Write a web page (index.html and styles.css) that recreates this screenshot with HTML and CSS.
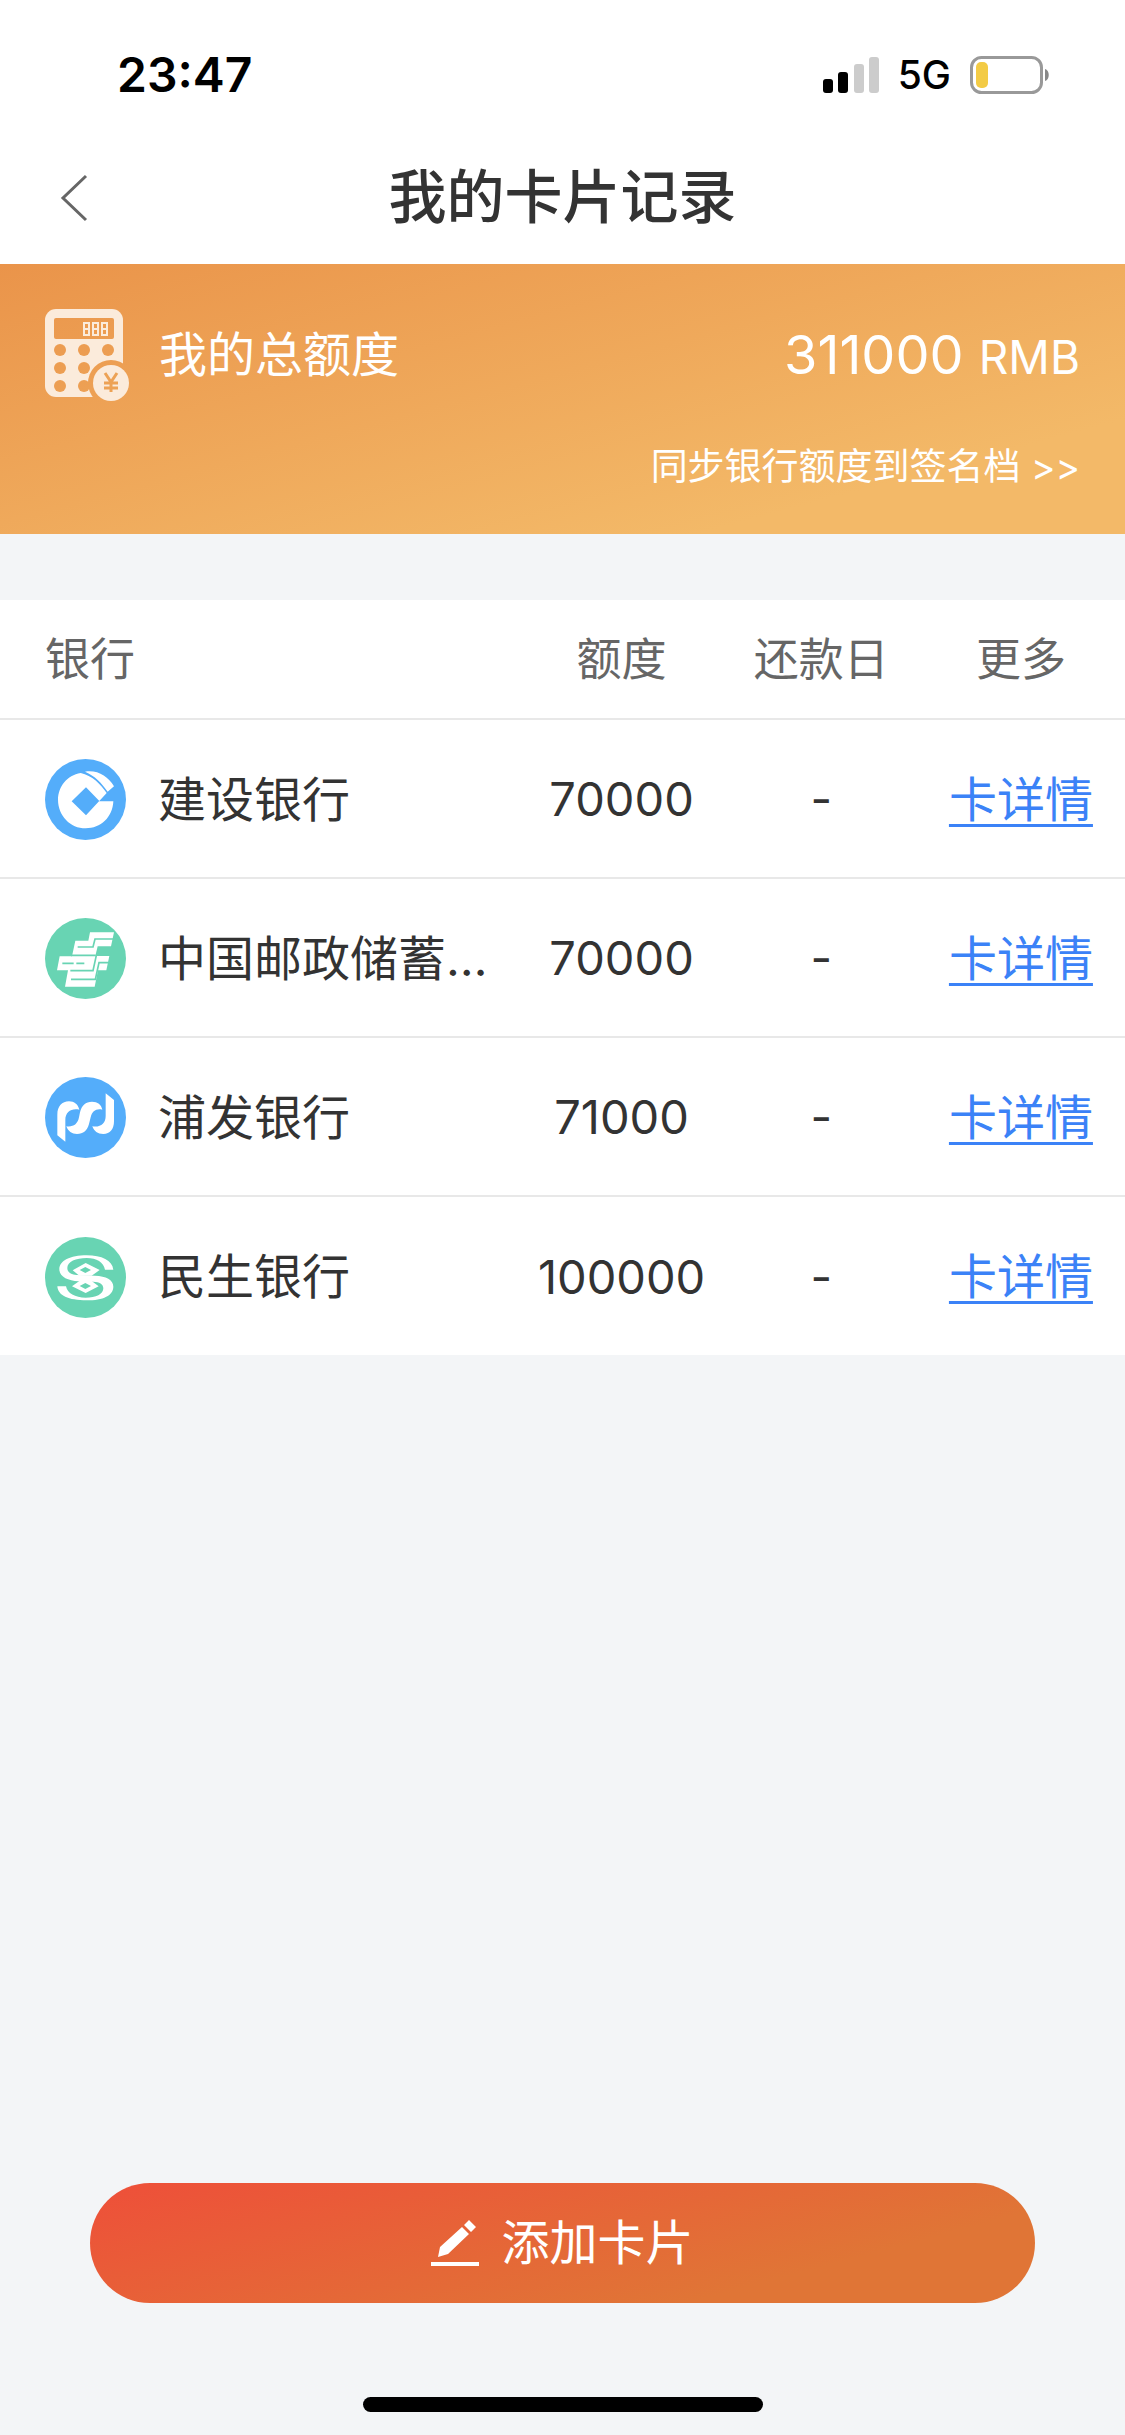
FILE: index.html
```html
<!DOCTYPE html>
<html lang="zh-CN">
<head>
    <meta charset="UTF-8">
    <meta name="viewport" content="width=device-width, initial-scale=1">
    <title>我的卡片记录</title>
    <link rel="stylesheet" href="styles.css">
</head>
<body>

    <div class="status-bar">
        <span class="time">23:47</span>
        <div class="status-icons">
            <svg class="signal" viewBox="0 0 56 36">
                <rect x="0" y="22" width="10" height="14" rx="3"/>
                <rect x="15" y="15" width="10" height="21" rx="3"/>
                <rect class="off" x="31" y="7" width="10" height="29" rx="3"/>
                <rect class="off" x="46" y="0" width="10" height="36" rx="3"/>
            </svg>
            <span class="network">5G</span>
            <svg class="battery" viewBox="0 0 80 38">
                <rect x="1.5" y="1.5" width="70" height="35" rx="10" fill="none" stroke="#999" stroke-width="3"/>
                <rect x="6" y="6" width="12" height="26" rx="5" fill="#f3cb45"/>
                <path d="M75 13c5 1 5 11 0 12z" fill="#888"/>
            </svg>
        </div>
    </div>

    <header class="nav-bar">
        <button class="back" type="button" aria-label="返回">
            <svg viewBox="0 0 28 48"><path d="M26 2 3 24l23 22"/></svg>
        </button>
        <h1>我的卡片记录</h1>
    </header>

    <main>
        <section class="summary">
            <div class="total">
                <svg class="calculator" viewBox="0 0 84 92">
                    <defs>
                        <mask id="body-mask">
                            <rect width="84" height="92" fill="#fff"/>
                            <rect x="9" y="9" width="60" height="21" rx="2" fill="#000"/>
                            <g fill="#000">
                                <circle cx="15" cy="41" r="6"/><circle cx="39" cy="41" r="6"/><circle cx="63" cy="41" r="6"/>
                                <circle cx="15" cy="59" r="6"/><circle cx="39" cy="59" r="6"/>
                                <circle cx="15" cy="77" r="6"/><circle cx="39" cy="77" r="6"/>
                                <circle cx="66" cy="74" r="23"/>
                            </g>
                        </mask>
                    </defs>
                    <rect width="78" height="88" rx="11" fill="#fbebdb" mask="url(#body-mask)"/>
                    <g fill="none" stroke="#fbebdb" stroke-width="2">
                        <path d="M39 14h5v12h-5zM39 20h5M48 14h5v12h-5zM48 20h5M57 14h5v12h-5zM57 20h5"/>
                    </g>
                    <circle cx="66" cy="74" r="18" fill="#fbebdb"/>
                    <path d="M60 64l6 9 6-9M66 73v10M59 74h14M59 79h14" fill="none" stroke="#eda255" stroke-width="3"/>
                </svg>
                <span class="total-label">我的总额度</span>
                <span class="total-amount">311000 <small>RMB</small></span>
            </div>
            <a class="sync" href="#">同步银行额度到签名档 &gt;&gt;</a>
        </section>

        <table class="cards">
            <thead>
                <tr>
                    <th class="col-bank">银行</th>
                    <th class="col-quota">额度</th>
                    <th class="col-day">还款日</th>
                    <th class="col-more">更多</th>
                </tr>
            </thead>
            <tbody>
                <tr>
                    <td>
                        <div class="bank">
                            <svg class="bank-logo" viewBox="45 56 243 243">
                                <circle cx="166.500" cy="177.500" r="121.500" fill="#54adfa"/>
                                <path d="M152 98C111 105 85 138 84 178c0 48 37 86 83 86 45 0 81-33 83-81h-43l-39 42-43-42 43-42 40 41 22-24c-18-26-44-53-78-60z" fill="#fff"/>
                                <path d="M165 94c38-6 69 14 87 44l-19 16c-19-27-38-47-68-60z" fill="#fff"/>
                            </svg>
                            <span class="bank-name">建设银行</span>
                        </div>
                    </td>
                    <td class="num">70000</td>
                    <td class="num">-</td>
                    <td class="more"><a href="#">卡详情</a></td>
                </tr>
                <tr>
                    <td>
                        <div class="bank">
                            <svg class="bank-logo" viewBox="0 0 243 243">
                                <circle cx="121.500" cy="121.500" r="121.500" fill="#68d4b3"/>
                                <path d="M135 43h72l-9 42h-40l-7 29h42l-9 43h-25l-10 49H60l9-49H36l8-42h37l10-47h39z" fill="#fff"/>
                                <path d="M206 63h-56l-6 24H98M152 112H78M52 136h34M94 136h24M154 112l-10 46H76M190 134h-28l-11 50H78" fill="none" stroke="#68d4b3" stroke-width="5"/>
                            </svg>
                            <span class="bank-name">中国邮政储蓄…</span>
                        </div>
                    </td>
                    <td class="num">70000</td>
                    <td class="num">-</td>
                    <td class="more"><a href="#">卡详情</a></td>
                </tr>
                <tr>
                    <td>
                        <div class="bank">
                            <svg class="bank-logo" viewBox="45 49 243 243">
                                <circle cx="166.500" cy="170.500" r="121.500" fill="#54adfa"/>
                                <path d="M82 224v-62c0-25 14-40 35-40 16 0 27 9 31 25-24-5-42 7-42 31v65z" fill="#fff"/>
                                <path d="M109 197c20 3 34-6 38-27l3-15c5-21 17-32 36-32 17 0 28 8 31 24-18-4-31 4-35 23l-5 20c-5 20-17 30-36 30-15 0-27-8-32-23z" fill="#fff"/>
                                <path d="M227 98l25 20v64c0 24-12 38-32 38-17 0-28-8-33-23 24 4 40-8 40-31z" fill="#fff"/>
                            </svg>
                            <span class="bank-name">浦发银行</span>
                        </div>
                    </td>
                    <td class="num">71000</td>
                    <td class="num">-</td>
                    <td class="more"><a href="#">卡详情</a></td>
                </tr>
                <tr>
                    <td>
                        <div class="bank">
                            <svg class="bank-logo" viewBox="45 53 243 243">
                                <circle cx="166.500" cy="174.500" r="121.500" fill="#68d4b3"/>
                                <path d="M250 151C247 123 215 108 170 108C120 108 88 124 88 150C88 173 115 184 145 186L190 187C208 188 220 194 220 207C220 225 198 235 167 235C135 235 112 222 108 201L82 201C84 229 115 243 170 243C220 243 250 228 250 202C250 181 228 170 195 169L140 167C123 165 112 159 112 146C112 127 138 116 170 116C200 116 221 129 225 151Z" fill="#fff"/>
                                <path d="M128 153l39-22 42 21-24 17h-37z" fill="#fff"/>
                                <path d="M206 201l-39 20-41-20 22-16h37z" fill="#fff"/>
                                <path d="M166 143l17 9-17 9-17-9zM166 191l17 9-17 9-17-9z" fill="#68d4b3"/>
                            </svg>
                            <span class="bank-name">民生银行</span>
                        </div>
                    </td>
                    <td class="num">100000</td>
                    <td class="num">-</td>
                    <td class="more"><a href="#">卡详情</a></td>
                </tr>
            </tbody>
        </table>
    </main>

    <footer>
        <button class="add-card" type="button">
            <svg class="pencil" viewBox="0 0 48 46">
                <path d="M7 37l2-10L31 7l7 7-21 20zM33 5l5-5 7 7-5 5z"/>
                <rect y="42" width="48" height="4"/>
            </svg>
            添加卡片
        </button>
        <div class="home-indicator"></div>
    </footer>

</body>
</html>
```
FILE: styles.css
```css
* {
    box-sizing: border-box;
}

body {
    margin: 0;
    min-height: 100vh;
    display: flex;
    flex-direction: column;
    font-family: Inter, "Noto Sans CJK SC", sans-serif;
    font-size: 48px;
    line-height: 1.2;
    color: #333;
    background-color: #f3f5f7;
}

button {
    border: none;
    padding: 0;
    font: inherit;
    cursor: pointer;
}

svg {
    display: block;
    flex-shrink: 0;
}

/* Status bar */
.status-bar {
    display: flex;
    justify-content: space-between;
    align-items: center;
    height: 132px;
    padding: 18px 75px 0 117px;
    color: #000;
    background-color: #fff;
}

.time {
    font-weight: 600;
}

.status-icons {
    display: flex;
    align-items: center;
}

.signal {
    width: 56px;
    height: 36px;
}

.signal .off {
    fill: #ccc;
}

.network {
    margin: 0 19px;
    font-size: 39px;
    font-weight: 500;
}

.battery {
    width: 80px;
    height: 38px;
}

/* Title bar */
.nav-bar {
    display: grid;
    grid-template-columns: 60px 1fr 60px;
    align-items: center;
    height: 132px;
    padding: 0 45px;
    background-color: #fff;
}

.back {
    padding-left: 15px;
    background: none;
}

.back svg {
    width: 28px;
    height: 48px;
    fill: none;
    stroke: #666;
    stroke-width: 3;
}

h1 {
    margin: 0;
    font-size: 58px;
    font-weight: 500;
    text-align: center;
}

/* Total quota */
.summary {
    display: flex;
    flex-direction: column;
    align-items: flex-end;
    height: 270px;
    padding: 45px;
    color: #fff;
    background: linear-gradient(165deg, #ea944a, #f3b968 80%);
}

.total {
    display: flex;
    align-items: center;
    width: 100%;
    height: 92px;
}

.calculator {
    width: 84px;
    height: 92px;
}

.total-label {
    margin-left: 30px;
}

.total-amount {
    margin-left: auto;
    font-size: 54px;
}

.total-amount small {
    font-size: 46px;
}

.sync {
    margin-top: 44px;
    font-size: 37px;
    color: #fff;
    text-decoration: none;
}

/* Card list */
.cards {
    width: 100%;
    margin-top: 66px;
    table-layout: fixed;
    border-collapse: collapse;
    background-color: #fff;
}

.cards th,
.cards td {
    padding: 2px 0 0;
    text-align: center;
}

.cards th {
    height: 119px;
    font-size: 45px;
    font-weight: 400;
    color: #666;
}

.cards td {
    height: 159px;
    border-top: 2px solid #e8e8e8;
}

.cards .col-bank {
    width: 46%;
    padding-left: 45px;
    text-align: left;
}

.col-quota {
    width: 18%;
}

.col-day {
    width: 18%;
}

.cards .num {
    font-size: 47px;
}

.bank {
    display: flex;
    align-items: center;
    gap: 32px;
    padding-left: 45px;
}

.bank-logo {
    width: 81px;
    height: 81px;
}

.bank-name {
    white-space: nowrap;
}

.more a {
    color: #3b82f7;
    text-decoration: underline;
    text-decoration-thickness: 3px;
    text-underline-offset: 7px;
}

.cards .col-quota {
    width: 18.5%;
}

.cards .col-day {
    width: 17%;
}

/* Bottom action */
footer {
    margin-top: auto;
    padding: 0 90px 23px;
}

.add-card {
    display: flex;
    justify-content: center;
    align-items: center;
    gap: 22px;
    width: 100%;
    height: 120px;
    border-radius: 60px;
    color: #fff;
    background: linear-gradient(165deg, #ee4f39, #e07536 75%);
}

.pencil {
    width: 48px;
    height: 46px;
    fill: #fff;
}

.home-indicator {
    width: 400px;
    height: 15px;
    margin: 94px auto 0;
    border-radius: 8px;
    background-color: #000;
}
```
